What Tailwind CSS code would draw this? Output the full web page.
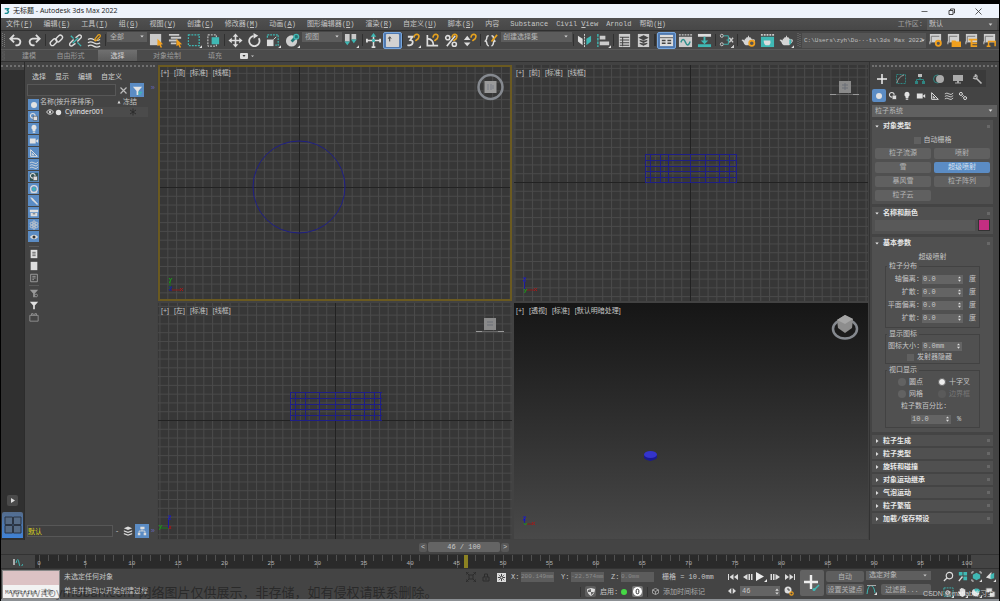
<!DOCTYPE html>
<html lang="zh-CN">
<head>
<meta charset="utf-8">
<meta name="viewport" content="width=device-width, initial-scale=1">
<title>无标题 - Autodesk 3ds Max 2022</title>
<script src="https://cdn.jsdelivr.net/npm/@tailwindcss/browser@4"></script>
</head>
<body class="relative flex min-h-screen flex-col overflow-hidden border-x border-black bg-[#444444] font-['Liberation_Mono','Noto_Sans_CJK_SC',monospace] text-[7px] leading-[10px] text-[#c6c6c6]">

<svg class="hidden" aria-hidden="true">
  <symbol id="grip" viewBox="0 0 4 16"><path d="M1 1v14M3 2v14" stroke="#777" stroke-dasharray="1 1"/></symbol>
  <symbol id="filter" viewBox="0 0 12 12"><path d="M1 2h10L7 6.500V11H5V6.500z" fill="currentColor"/></symbol>
  <symbol id="down" viewBox="0 0 6 4"><path d="M.5.5h5L3 3.500z" fill="currentColor"/></symbol>
  <symbol id="spin" viewBox="0 0 4 8"><path d="M0 3h4L2 .5zM0 5h4L2 7.500z" fill="#ddd"/></symbol>
  <symbol id="sphere" viewBox="0 0 12 12"><circle cx="6" cy="6" r="3.600" fill="#e2e2e2"/></symbol>
  <symbol id="shapes" viewBox="0 0 12 12"><circle cx="4.500" cy="4.500" r="2.800" fill="none" stroke="#ddd" stroke-width="1.300"/><rect x="5" y="5" width="5" height="5" fill="#ddd" stroke="#444" stroke-width=".6"/></symbol>
  <symbol id="bulb" viewBox="0 0 12 12"><path d="M6 1a3.300 3.300 0 0 0-1.700 6v1.500h3.400V7A3.300 3.300 0 0 0 6 1zM4.500 9h3v1.500h-3z" fill="#e2e2e2"/></symbol>
  <symbol id="camera" viewBox="0 0 12 12"><path d="M1 3h7v6H1zM8 6l3-2.500v5z" fill="#e2e2e2"/></symbol>
  <symbol id="helper" viewBox="0 0 12 12"><path d="M2 2v8h8zM4 6.500v1.700h1.800z" fill="none" stroke="#ddd" stroke-width="1.200"/></symbol>
  <symbol id="waves" viewBox="0 0 12 12"><path d="M1 3.500q2.500-2 5 0t5-1M1 6.500q2.500-2 5 0t5-1M1 9.500q2.500-2 5 0t5-1" fill="none" stroke="#ddd"/></symbol>
  <symbol id="gears" viewBox="0 0 12 12"><circle cx="3.500" cy="3.500" r="1.800" fill="none" stroke="#ddd" stroke-width="1.200"/><circle cx="8.500" cy="8.500" r="1.800" fill="none" stroke="#ddd" stroke-width="1.200"/><path d="M4.500 7.500L7 5" stroke="#ddd"/></symbol>
  <symbol id="teapot" viewBox="0 0 16 16"><path d="M4 6h8q2 4-1 7H5Q3 12 2.500 9.500L.5 7.500 2 7l2 1zM6 4.500h4L11 6H5zM7.500 3h1v1.500h-1zM12.500 7c3-1.500 3 3 0 4V9.800c1.500-1 1.500-2 0-1.600z" fill="#d4d4d4"/></symbol>
  <symbol id="page" viewBox="0 0 16 16"><path d="M2 1h12v9H2z" fill="#cfcfcf"/><path d="M3.500 10V3.500h8.500" fill="none" stroke="#777"/><path d="M2 12V9" stroke="#cfcfcf"/></symbol>
  <symbol id="magnet" viewBox="0 0 16 16"><path d="M8.500 5q.5-4 3.500-3.500T13 6l-3 2.500" fill="none" stroke="#e5a11e" stroke-width="1.800"/></symbol>
</svg>

<div class="h-1 shrink-0 bg-black"></div>

<header class="flex h-[14px] shrink-0 items-center bg-[#eef3fb] pl-[3px] font-['Open_Sans','Noto_Sans_CJK_SC',sans-serif] text-[#222]">
  <svg class="mr-[3px] size-[6px]" viewBox="0 0 8 8"><path d="M1 1h5L4.500 3.500Q7 4 5.500 6T1 7" fill="none" stroke="#1b8d92" stroke-width="1.800"/></svg>
  <h1>无标题 - Autodesk 3ds Max 2022</h1>
  <div class="ml-auto flex pr-[7px]">
    <button aria-label="最小化" class="grid w-[27px] place-items-center"><svg class="size-[7px]" viewBox="0 0 7 7"><path d="M.5 3.500h6" stroke="#444" stroke-width=".8"/></svg></button>
    <button aria-label="还原" class="grid w-[27px] place-items-center"><svg class="size-[7px]" viewBox="0 0 7 7" fill="none" stroke="#333" stroke-width=".9"><path d="M1 2.500h4v4H1zM2.500 2V1h4v4H5.500"/></svg></button>
    <button aria-label="关闭" class="grid w-[27px] place-items-center"><svg class="size-[7px]" viewBox="0 0 7 7"><path d="M.5.5l6 6M6.500.5l-6 6" stroke="#333" stroke-width=".8"/></svg></button>
  </div>
</header>

<nav class="flex h-3 shrink-0 items-center gap-[11px] whitespace-nowrap bg-linear-to-b from-[#505050] to-[#474747] pl-[5px]">
  <button>文件(<u>F</u>)</button><button>编辑(<u>E</u>)</button><button>工具(<u>T</u>)</button><button>组(<u>G</u>)</button><button>视图(<u>V</u>)</button><button>创建(<u>C</u>)</button><button>修改器(<u>M</u>)</button><button>动画(<u>A</u>)</button><button>图形编辑器(<u>D</u>)</button><button>渲染(<u>R</u>)</button><button>自定义(<u>U</u>)</button><button>脚本(<u>S</u>)</button><button>内容</button>
  <div class="flex gap-2"><button>Substance</button><button>Civil <u>V</u>iew</button><button>Arnold</button><button>帮助(<u>H</u>)</button></div>
  <div class="ml-auto flex items-center gap-1 pr-[2px] text-[#a0a0a0]">
    <label for="ws">工作区:</label>
    <div class="relative w-[70px]">
      <select id="ws" class="block h-[11px] w-full appearance-none bg-[#585858] pl-[2px] leading-[11px] text-[#c6c6c6]"><option>默认</option></select>
      <svg class="pointer-events-none absolute top-1 right-1 h-[3px] w-[5px] text-[#ccc]"><use href="#down"/></svg>
    </div>
  </div>
</nav>

<div class="flex h-[19px] shrink-0 items-center border-t border-[#303030] bg-[#474747] text-[#d4d4d4] [&_button]:grid [&_button]:h-[17px] [&_button]:w-[19px] [&_button]:shrink-0 [&_button]:place-items-center [&_button>svg]:size-[15px]">
  <svg class="h-4 w-[5px]"><use href="#grip"/></svg>
  <button aria-label="撤销"><svg viewBox="0 0 16 16" fill="none" stroke="#ddd" stroke-width="2"><path d="M3 6h7q4 1 3 4.500T8 13M6.500 2L2.500 6l4 4"/></svg></button>
  <button aria-label="重做"><svg viewBox="0 0 16 16" fill="none" stroke="#ddd" stroke-width="2"><path d="M13 6H6Q2 7 3 10.500T8 13M9.500 2l4 4-4 4"/></svg></button>
  <i class="mx-px h-3 w-px shrink-0 bg-[#303030]"></i>
  <button aria-label="链接"><svg viewBox="0 0 16 16" fill="none" stroke="#ddd" stroke-width="1.500"><rect x="1" y="7.500" width="8" height="4.600" rx="2.300" transform="rotate(-45 5 10)"/><rect x="7" y="3.500" width="8" height="4.600" rx="2.300" transform="rotate(-45 11 6)"/></svg></button>
  <button aria-label="取消链接"><svg viewBox="0 0 16 16" fill="none" stroke="#ddd" stroke-width="1.500"><path d="M6 7L2 11q-1 3 2 3l4-3M8 5l4-3q3 0 2 3l-4 4"/><path d="M3 3l3 3M10 10l4 4M11 5L5 11" stroke="#3fb8b4"/></svg></button>
  <button aria-label="绑定到空间扭曲"><svg viewBox="0 0 16 16" fill="none" stroke="#ddd" stroke-width="1.300"><path d="M1 7q3-2 6 0t7 0M1 10.500q3-2 6 0t7 0M1 14q3-2 6 0t7 0"/><path d="M8 7l4-5q3-1 2 2l-4 4q-2 1-2-1" stroke="#e5a11e"/></svg></button>
  <i class="mx-px h-3 w-px shrink-0 bg-[#303030]"></i>
  <div class="relative w-10 shrink-0 self-start pt-px">
    <select aria-label="选择过滤器" class="block h-[10px] w-full appearance-none bg-[#5c5c5c] pl-[3px] leading-[10px] text-[#b4b4b4]"><option>全部</option></select>
    <svg class="pointer-events-none absolute top-1 right-[3px] h-[3px] w-1"><use href="#down"/></svg>
  </div>
  <button aria-label="选择对象"><svg viewBox="0 0 16 16"><path d="M1 1h12v12H1z" fill="#c9c9c9"/><path d="M9 6l6 6-2.500.3 1.500 3-1.500.5-1.500-3L9 14z" fill="#f0a01e"/></svg></button>
  <button aria-label="按名称选择"><svg viewBox="0 0 16 16"><path d="M1 2h11M3 5h11M1 8h9M3 11h6" stroke="#c9c9c9" stroke-width="2"/><path d="M9 6l6 6-2.500.3 1.500 3-1.500.5-1.500-3L9 14z" fill="#f0a01e"/></svg></button>
  <button aria-label="矩形选择区域"><svg viewBox="0 0 16 16"><rect x="1.500" y="2" width="11.500" height="11.500" fill="none" stroke="#3fb8b4" stroke-width="1.300" stroke-dasharray="2 1.200"/><path d="M16 13v3h-3z" fill="#ddd"/></svg></button>
  <button aria-label="窗口/交叉"><svg viewBox="0 0 16 16"><rect x="2" y="2" width="9" height="12" fill="none" stroke="#ddd" stroke-dasharray="2 1.200"/><rect x="6" y="4.500" width="8" height="7.500" fill="#3fb8b4"/></svg></button>
  <i class="mx-px h-3 w-px shrink-0 bg-[#303030]"></i>
  <button aria-label="选择并移动"><svg viewBox="0 0 16 16"><path d="M8 3v10M3 8h10" stroke="#ddd" stroke-width="1.700"/><path d="M8 .5L11 4H5zM8 15.500L11 12H5zM.5 8L4 5v6zM15.500 8L12 5v6z" fill="#ddd"/></svg></button>
  <button aria-label="选择并旋转"><svg viewBox="0 0 16 16"><path d="M12.500 5.500A5.500 5.500 0 1 1 7 3" fill="none" stroke="#ddd" stroke-width="1.900"/><path d="M7 0l5 3-5 3z" fill="#ddd"/></svg></button>
  <button aria-label="选择并均匀缩放"><svg viewBox="0 0 16 16"><path d="M1 7h7v7H1z" fill="#ddd"/><path d="M1.500 5V2H13v11h-3" fill="none" stroke="#3fb8b4" stroke-width="1.300" stroke-dasharray="2 1"/><path d="M8 7l3-3" stroke="#ddd"/><path d="M16 13v3h-3z" fill="#ddd"/></svg></button>
  <button aria-label="选择并放置"><svg viewBox="0 0 16 16"><circle cx="7" cy="8.500" r="6" fill="#cfcfcf"/><path d="M7 9l6-6" stroke="#277" stroke-width="3"/><circle cx="12" cy="4" r="2.500" fill="none" stroke="#3fb8b4" stroke-width="1.500"/><path d="M16 13v3h-3z" fill="#ddd"/></svg></button>
  <div class="relative w-10 shrink-0 self-start pt-px">
    <select aria-label="参考坐标系" class="block h-[10px] w-full appearance-none bg-[#5c5c5c] pl-[3px] leading-[10px] text-[#b4b4b4]"><option>视图</option></select>
    <svg class="pointer-events-none absolute top-1 right-[3px] h-[3px] w-1"><use href="#down"/></svg>
  </div>
  <button aria-label="使用轴点中心"><svg viewBox="0 0 16 16"><path d="M1 1h5v8H1zM8 1h5v6H8z" fill="#c9c9c9"/><path d="M.5 9h6l-3 4zM7.500 7h6l-3 4z" fill="#3fb8b4"/><path d="M16 13v3h-3z" fill="#ddd"/></svg></button>
  <i class="mx-px h-3 w-px shrink-0 bg-[#303030]"></i>
  <button aria-label="选择并操纵"><svg viewBox="0 0 16 16"><path d="M8 3v12M1 8h14" stroke="#ddd" stroke-width="1.700"/><path d="M1 6v4M15 6v4M6 15h4" stroke="#ddd" stroke-width="2"/><path d="M8 0l3 4H5zM6.500 6.500h3v3h-3z" fill="#3fb8b4"/></svg></button>
  <button aria-label="键盘快捷键覆盖切换" class="rounded-xs border border-[#78a7de] bg-[#4f79b0]"><svg viewBox="0 0 16 16"><rect x="1" y="1" width="14" height="14" rx="1" fill="#d2d2d2"/><path d="M5 9V5M3.500 6L5 4l1.500 2" fill="none" stroke="#333"/></svg></button>
  <i class="mr-px h-3 w-px shrink-0 bg-[#303030]"></i>
  <button aria-label="捕捉开关"><svg viewBox="0 0 16 16"><path d="M2 4h5L4.500 7.500Q8 8 7 11T1.500 13" fill="none" stroke="#ddd" stroke-width="1.900"/><use href="#magnet"/><path d="M16 13v3h-3z" fill="#ddd"/></svg></button>
  <button aria-label="角度捕捉"><svg viewBox="0 0 16 16"><path d="M2.500 2v11.500H14M3 6q6 1 6 7" fill="none" stroke="#ddd" stroke-width="1.800"/><use href="#magnet"/></svg></button>
  <button aria-label="百分比捕捉"><svg viewBox="0 0 16 16" fill="none" stroke="#ddd" stroke-width="1.700"><circle cx="4" cy="5" r="2.200"/><circle cx="11" cy="12" r="2.200"/><path d="M3 14L12 3"/><use href="#magnet"/></svg></button>
  <button aria-label="微调器捕捉"><svg viewBox="0 0 16 16"><path d="M1 7.500h7L4.500 3zM1 10h7l-3.500 4z" fill="#ddd"/><use href="#magnet"/></svg></button>
  <i class="mr-px h-3 w-px shrink-0 bg-[#303030]"></i>
  <button aria-label="管理选择集"><svg viewBox="0 0 16 16" fill="none" stroke="#ddd" stroke-width="1.600"><path d="M5 3Q3 3 3 5t-1.500 3.500Q3 9 3 11t2 3M8 3q2 0 2 2t1.500 3.500Q10 9 10 11t-2 3"/><path d="M8 9l6-7" stroke="#e5a11e" stroke-width="1.800"/></svg></button>
  <div class="relative w-[71px] shrink-0 self-start pt-px">
    <select aria-label="创建选择集" class="block h-[10px] w-full appearance-none bg-[#5c5c5c] pl-[2px] leading-[10px] text-[#b4b4b4]"><option>创建选择集</option></select>
    <svg class="pointer-events-none absolute top-1 right-1 h-[3px] w-1"><use href="#down"/></svg>
  </div>
  <i class="mx-px h-3 w-px shrink-0 bg-[#303030]"></i>
  <button aria-label="镜像"><svg viewBox="0 0 16 16"><path d="M1 3l5 3v7l-5-4z" fill="#ddd"/><path d="M8 1v14" stroke="#ddd" stroke-dasharray="2 1"/><path d="M15 3l-5 3v7l5-4z" fill="#3fb8b4"/></svg></button>
  <button aria-label="对齐"><svg viewBox="0 0 16 16"><path d="M2 1v14" stroke="#3fb8b4" stroke-width="1.500" stroke-dasharray="3 1"/><path d="M4 3h6v4H4zM4 9h10v4H4z" fill="#ccc"/><path d="M16 13v3h-3z" fill="#ddd"/></svg></button>
  <i class="mr-px h-3 w-px shrink-0 bg-[#303030]"></i>
  <button aria-label="场景资源管理器"><svg viewBox="0 0 16 16"><path d="M2 1h12v14H2z" fill="#ccc"/><path d="M3 4.500h10M3 7.500h10M3 10.500h10M3 13h10M6 4v10" stroke="#444" stroke-width="1.100"/></svg></button>
  <button aria-label="层资源管理器"><svg viewBox="0 0 16 16"><path d="M2 1h12v14H2z" fill="#ccc"/><path d="M8 3l4 2-4 2-4-2zM4 8l4 2 4-2M4 11l4 2 4-2" fill="#444" stroke="#444" stroke-width="1.300"/></svg></button>
  <i class="mx-px h-3 w-[2px] shrink-0 bg-[#303030]"></i>
  <button aria-label="显示功能区" class="rounded-xs border border-[#78a7de] bg-[#4f79b0]"><svg viewBox="0 0 16 16"><path d="M1 2h14v12H1z" fill="#ddd"/><path d="M1 5h14" stroke="#555"/><path d="M3 8h4M9 8h4M3 11h4M9 11h4" stroke="#444" stroke-width="1.700"/></svg></button>
  <button aria-label="曲线编辑器"><svg viewBox="0 0 16 16"><path d="M1 4h14v11H1z" fill="#ccc"/><path d="M1 2h14" stroke="#ccc" stroke-width="1.500" stroke-dasharray="2 1"/><path d="M3 10q2.500-6 5 0t5-1" fill="none" stroke="#2f8f8c" stroke-width="1.500"/></svg></button>
  <button aria-label="图解视图"><svg viewBox="0 0 16 16"><path d="M1 1h14v3H1z" fill="#ddd"/><path d="M7 4h2v4h3l-4 4-4-4h3z" fill="#3fb8b4"/><path d="M1 12h14v3H1z" fill="#3fb8b4"/></svg></button>
  <i class="mx-px h-3 w-px shrink-0 bg-[#303030]"></i>
  <button aria-label="材质编辑器"><svg viewBox="0 0 16 16" fill="none" stroke="#ccc"><circle cx="3" cy="3" r="1.600"/><circle cx="3" cy="12" r="1.600"/><path d="M5 3h5v9H5M8 7.500h3" stroke="#3fb8b4"/><path d="M11 5l4 5M15 5l-4 5" stroke-width="1.500"/><path d="M16 13v3h-3z" fill="#ddd"/></svg></button>
  <i class="mx-px h-3 w-px shrink-0 bg-[#303030]"></i>
  <button aria-label="渲染设置"><svg viewBox="0 0 16 16"><use href="#teapot"/><circle cx="11.500" cy="11" r="2.800" fill="#555" stroke="#f0a01e" stroke-width="1.800"/></svg></button>
  <button aria-label="渲染帧窗口"><svg viewBox="0 0 16 16"><path d="M1 4h14v11H1z" fill="#3fb8b4"/><path d="M1 2h14" stroke="#ccc" stroke-width="2" stroke-dasharray="2 1"/><path d="M4 8h7q1 3-1 5H6Q4 12 4 8z" fill="#ddd"/></svg></button>
  <button aria-label="渲染产品"><svg viewBox="0 0 16 16"><use href="#teapot"/><path d="M12 7v5" stroke="#3fb8b4" stroke-width="2"/><path d="M16 13v3h-3z" fill="#ddd"/></svg></button>
  <svg class="mx-px h-4 w-1 shrink-0"><use href="#grip"/></svg>
  <div class="relative min-w-0 flex-1">
    <select aria-label="项目文件夹" class="block h-[15px] w-full appearance-none bg-[#555] pl-[2px] text-[6px] leading-[15px] text-[#c0c0c0]"><option>C:\Users\zyh\Do···ts\3ds Max 2022</option></select>
    <svg class="pointer-events-none absolute top-[6px] right-px h-[3px] w-1"><use href="#down"/></svg>
  </div>
  <div class="flex pr-px [&>button]:w-[18px]">
    <button aria-label="项目设置"><svg viewBox="0 0 16 16"><use href="#page"/><circle cx="11" cy="11" r="2.700" fill="#555" stroke="#f0a01e" stroke-width="2"/></svg></button>
    <button aria-label="打开项目"><svg viewBox="0 0 16 16"><use href="#page"/><path d="M6 8h4l1 1h5v6H6z" fill="#f0a01e"/></svg></button>
    <button aria-label="项目树"><svg viewBox="0 0 16 16"><use href="#page"/><path d="M5 7h9M8 8v6h6M8 11h6" fill="none" stroke="#f0a01e" stroke-width="2"/></svg></button>
    <button aria-label="项目路径"><svg viewBox="0 0 16 16"><use href="#page"/><path d="M7 14V9h7v5M5 14h4" fill="none" stroke="#f0a01e" stroke-width="1.600"/></svg></button>
  </div>
</div>

<div class="flex h-[13px] shrink-0 items-center border-y border-y-[#5a5a5a] border-b-[#303030] bg-[#4b4b4b] text-[#9c9c9c]">
  <svg class="h-[11px] w-[5px]"><use href="#grip"/></svg>
  <button class="w-[46px]">建模</button>
  <button class="w-[37px]">自由形式</button>
  <button class="ml-[9px] h-full w-[39px] bg-linear-to-b from-[#707070] to-[#5c5c5c] text-[#d4d4d4]">选择</button>
  <button class="ml-[10px] w-[40px]">对象绘制</button>
  <button class="ml-[18px] w-[20px]">填充</button>
  <button aria-label="更多" class="ml-[15px]"><svg class="h-[6px] w-[15px]" viewBox="0 0 15 6"><rect width="8" height="6" rx="1" fill="#ddd"/><path d="M2.500 2h3L4 4z" fill="#333"/><path d="M11 2.500h3L12.500 4z" fill="#ccc"/></svg></button>
</div>

<main class="flex min-h-0 flex-1 bg-[#424242]">
  <aside class="flex w-[23px] shrink-0 flex-col items-center bg-[#303030] pb-[2px]">
    <div class="flex h-2 w-full items-center bg-[#444]"><div class="h-[2px] w-full border-t-2 border-dotted border-[#707070]"></div></div>
    <button aria-label="播放" class="mt-auto grid size-[11px] place-items-center rounded-xs bg-[#4a4a4a]"><svg class="h-[5px] w-1" viewBox="0 0 4 5"><path d="M0 0l4 2.500L0 5z" fill="#ddd"/></svg></button>
    <button aria-label="视口布局" class="mt-[6px] grid h-[26px] w-[21px] place-items-center rounded-t-xs bg-linear-to-b from-[#546c8c] to-[#3f82d6]"><svg class="size-[18px]" viewBox="0 0 18 18" fill="#566b85" stroke="#2b3442"><path d="M1 1h7.500v7.500H1zM9.500 1H17v7.500H9.500zM1 9.500h7.500V17H1zM9.500 9.500H17V17H9.500z"/></svg></button>
  </aside>

  <section class="flex w-[133px] shrink-0 flex-col border-l border-[#2c2c2c] bg-[#444] px-[2px] pb-[2px]">
    <div class="flex h-2 items-center"><div class="h-[2px] w-full border-t-2 border-dotted border-[#707070]"></div></div>
    <nav class="flex h-[13px] items-center gap-[9px] pl-[5px] text-[#d0d0d0]"><button>选择</button><button>显示</button><button>编辑</button><button>自定义</button></nav>
    <div class="flex h-[14px] items-center">
      <input aria-label="搜索" class="h-3 min-w-0 flex-1 border border-[#575757] bg-[#404040]">
      <button aria-label="清除" class="grid w-[14px] place-items-center"><svg class="size-[7px]" viewBox="0 0 7 7"><path d="M.5.5l6 6M6.500.5l-6 6" stroke="#bbb" stroke-width="1.200"/></svg></button>
      <button aria-label="过滤" class="grid size-[14px] place-items-center bg-[#5b8cc4]"><svg class="size-[11px] text-[#e4e4e4]" viewBox="0 0 12 12"><use href="#filter"/><path d="M7 8h4M7 10h3" stroke="#3fb8b4" stroke-width="1.500"/></svg></button>
      <span class="w-[11px] self-start text-right text-[#6464b8]">»</span>
    </div>
    <div class="flex flex-1">
      <div class="flex w-[13px] flex-col items-center pt-[2px] text-[#d0d0d0] [&_svg]:size-[10px]">
        <div class="flex flex-col gap-px [&>button]:grid [&>button]:h-[11px] [&>button]:w-[11px] [&>button]:place-items-center [&>button]:bg-[#5b8cc4]">
          <button aria-label="几何体"><svg><use href="#sphere"/></svg></button>
          <button aria-label="图形"><svg><use href="#shapes"/></svg></button>
          <button aria-label="灯光"><svg><use href="#bulb"/></svg></button>
          <button aria-label="摄影机"><svg><use href="#camera"/></svg></button>
          <button aria-label="辅助对象"><svg><use href="#helper"/></svg></button>
          <button aria-label="空间扭曲"><svg><use href="#waves"/></svg></button>
          <button aria-label="组"><svg viewBox="0 0 12 12"><path d="M1 1h10v10H1z" fill="#355"/><use href="#shapes"/></svg></button>
          <button aria-label="外部参照"><svg viewBox="0 0 12 12"><circle cx="6" cy="6" r="4" fill="none" stroke="#ddd" stroke-width="1.500"/><circle cx="6" cy="6" r="2" fill="#3fb8b4"/><path d="M2 10.500h8" stroke="#ddd"/></svg></button>
          <button aria-label="骨骼"><svg viewBox="0 0 12 12"><path d="M2 2l2 .5 6 6.500v1.500L4 5z" fill="#ddd" stroke="#ddd" stroke-width=".6"/></svg></button>
          <button aria-label="容器"><svg viewBox="0 0 12 12"><path d="M1 2h10v3H1zM2 6h8v4H2z" fill="#ddd"/><path d="M4.500 7h3" stroke="#555"/></svg></button>
          <button aria-label="冻结对象"><svg viewBox="0 0 12 12" fill="none" stroke="#ccc"><circle cx="6" cy="6" r="1.500"/><circle cx="6" cy="2.500" r="1.500"/><circle cx="6" cy="9.500" r="1.500"/><circle cx="3" cy="4.300" r="1.500"/><circle cx="9" cy="4.300" r="1.500"/><circle cx="3" cy="7.800" r="1.500"/><circle cx="9" cy="7.800" r="1.500"/></svg></button>
          <button aria-label="隐藏对象"><svg viewBox="0 0 12 12"><path d="M1 6q5-5.500 10 0-5 5.500-10 0z" fill="#ddd"/><circle cx="6" cy="6" r="1.800" fill="#333"/></svg></button>
        </div>
        <div class="mt-1 flex flex-col gap-[2px] border-y border-[#5a5a5a] py-[2px]">
          <button aria-label="全选"><svg class="block" viewBox="0 0 12 12"><path d="M2 1h8v10H2z" fill="#ddd"/><path d="M4 4h4M4 6h4M4 8h4" stroke="#555"/></svg></button>
          <button aria-label="全部不选"><svg class="block" viewBox="0 0 12 12"><path d="M2 1h8v10H2z" fill="#ddd"/></svg></button>
          <button aria-label="反选"><svg class="block" viewBox="0 0 12 12"><path d="M2 1.500h8v9H2zM4 4h4M4 6h4M4 8h2" fill="none" stroke="#aaa"/></svg></button>
        </div>
        <div class="mt-[2px] flex flex-col gap-[2px]">
          <button aria-label="过滤器设置"><svg class="block text-[#999]" viewBox="0 0 12 12"><use href="#filter"/><circle cx="8.500" cy="9" r="1.700" fill="none" stroke="#999"/></svg></button>
          <button aria-label="过滤器"><svg class="block text-[#e0e0e0]"><use href="#filter"/></svg></button>
          <button aria-label="收藏"><svg class="block" viewBox="0 0 12 12"><path d="M1 4h10v7H1zM3 4V2h2v2M7 4V2h2v2" fill="none" stroke="#999"/></svg></button>
        </div>
      </div>
      <table class="h-min w-[108px] table-fixed border-separate border-spacing-0 text-left">
        <thead><tr class="h-[10px]"><th class="w-[77px] whitespace-nowrap p-0 font-['Liberation_Sans','Noto_Sans_CJK_SC',sans-serif] font-normal">名称(按升序排序)</th><th class="whitespace-nowrap p-0 font-normal"><span class="flex items-center gap-[2px]"><svg class="size-1" viewBox="0 0 4 4"><path d="M.5 3.500L2 .5l1.500 3z" fill="#ddd"/></svg>冻结</span></th></tr></thead>
        <tbody><tr class="h-[10px]">
          <td class="p-0"><span class="flex items-center font-['Open_Sans',sans-serif] text-[#eee]"><svg class="ml-[6px] h-[6px] w-2" viewBox="0 0 8 6"><path d="M.5 3Q4-1.500 7.500 3 4 7.500.5 3z" fill="none" stroke="#ddd"/><circle cx="4" cy="3" r="1.200" fill="#ddd"/></svg><svg class="mr-[2px] size-[9px]"><use href="#sphere"/></svg><span class="flex-1 bg-[#4b4b4b]">Cylinder001</span></span></td>
          <td class="bg-[#4b4b4b] p-0"><svg class="mx-auto size-2" viewBox="0 0 8 8"><path d="M4 .5v7M1 2l6 4M7 2L1 6" stroke="#2c2c2c"/></svg></td>
        </tr></tbody>
      </table>
    </div>
    <div class="flex h-[14px] items-center">
      <input aria-label="层" value="默认" class="h-3 min-w-0 flex-1 border border-[#575757] bg-[#404040] text-[#d8d21e]">
      <span class="w-[8px] text-center">-</span>
      <button aria-label="层列表" class="grid w-[14px] place-items-center"><svg class="size-[10px]" viewBox="0 0 12 12" fill="#ddd"><path d="M6 .5l5 2.200-5 2.200-5-2.200zM1 5l5 2 5-2v1.500l-5 2-5-2zM1 8.300l5 2 5-2v1.500l-5 2-5-2z"/></svg></button>
      <button aria-label="层次" class="grid size-[14px] place-items-center bg-[#5b8cc4]"><svg class="size-[10px]" viewBox="0 0 12 12"><path d="M4 1h5v3H4zM1 8h3v3H1zM8 8h3v3H8z" fill="#ddd"/><path d="M6 4v2M2.500 8V6h7v2" fill="none" stroke="#ddd"/></svg></button>
      <span class="w-[6px] text-right text-[#6464b8]">»</span>
    </div>
  </section>

  <div class="grid min-w-0 flex-1 grid-cols-2 grid-rows-2 gap-[2px] pt-[3px] pb-px pl-px text-[#c4c4c4]">
    <section class="relative overflow-hidden border-2 border-[#6b5a20] bg-[#373737]">
      <svg class="absolute inset-0 size-full">
        <defs><pattern id="g1" x="139" y="120" width="8.780" height="8.780" patternUnits="userSpaceOnUse"><path d="M.5 0v8.780M0 .5h8.780" stroke="#4a4a4a"/></pattern></defs>
        <rect width="100%" height="100%" fill="url(#g1)"/>
        <path d="M139.500 0v600M0 120.500h1200" stroke="#222"/>
        <circle cx="139" cy="120" r="46" fill="none" stroke="#1e1e86"/>
        <g fill="none"><path d="M10 222v-8" stroke="#1a7a1a"/><path d="M12 223h9" stroke="#8a1a1a"/><path d="M9 220h3l-3 3h3" stroke="#1a1aa0"/><path d="M9 211l1.500 2L12 211M10.500 213l-1 3" stroke="#1a9a1a"/><path d="M20 221l3 3M23 221l-3 3" stroke="#a01a1a"/></g>
        <g><circle cx="330.500" cy="20" r="12" fill="none" stroke="#85898f" stroke-width="2.500"/><rect x="324.500" y="14" width="12" height="12" fill="#9a9a9a"/><path d="M328 17v6M331 17v6M333 18v4" stroke="#7b7f88"/></g>
      </svg>
      <h2 class="relative flex gap-[5px] px-px pt-px font-['Liberation_Sans','Noto_Sans_CJK_SC',sans-serif] whitespace-nowrap"><button>[+]</button><button>[顶]</button><button>[标准]</button><button>[线框]</button></h2>
    </section>
    <section class="relative overflow-hidden bg-[#373737]">
      <svg class="absolute inset-0 size-full">
        <defs><pattern id="g2" x="176" y="117" width="8.780" height="8.780" patternUnits="userSpaceOnUse"><path d="M.5 0v8.780M0 .5h8.780" stroke="#4a4a4a"/></pattern></defs>
        <rect width="100%" height="100%" fill="url(#g2)"/>
        <path d="M176.500 0v600M0 117.500h1200" stroke="#222"/>
        <path d="M131 89.500h92M131 95.500h92M131 101.500h92M131 106.500h92M131 112.500h92M131 117.500h92M131.500 89v29M136.500 89v29M146.500 89v29M154.500 89v29M176.500 89v29M191.500 89v29M205.500 89v29M215.500 89v29M222.500 89v29" stroke="#1e1e86"/>
        <g fill="none"><path d="M10.500 225v-8" stroke="#1a1aa0"/><path d="M12 225h8" stroke="#8a1a1a"/><path d="M9 213h3l-3 3h3" stroke="#1a1ac0"/><path d="M10 224l1.500 2L13 224M11.500 226l-1 2" stroke="#1a9a1a"/><path d="M20 223l3 3M23 223l-3 3" stroke="#a01a1a"/></g>
        <rect x="325" y="16" width="12" height="12" fill="#8a8a8a"/><path d="M328 20h6M328 23h6M331 18v7" stroke="#6b6f76"/><path d="M316 29.500h6M339 29.500h6" stroke="#999"/><path d="M322 29.500h17" stroke="#666"/>
      </svg>
      <h2 class="relative flex gap-[5px] px-[2px] pt-[3px] font-['Liberation_Sans','Noto_Sans_CJK_SC',sans-serif] whitespace-nowrap"><button>[+]</button><button>[前]</button><button>[标准]</button><button>[线框]</button></h2>
    </section>
    <section class="relative overflow-hidden bg-[#373737]">
      <svg class="absolute inset-0 size-full">
        <defs><pattern id="g3" x="177" y="117" width="8.780" height="8.780" patternUnits="userSpaceOnUse"><path d="M.5 0v8.780M0 .5h8.780" stroke="#4a4a4a"/></pattern></defs>
        <rect width="100%" height="100%" fill="url(#g3)"/>
        <path d="M177.500 0v600M0 117.500h1200" stroke="#222"/>
        <path d="M132 89.500h92M132 95.500h92M132 101.500h92M132 106.500h92M132 112.500h92M132 117.500h92M132.500 89v29M137.500 89v29M147.500 89v29M161.500 89v29M177.500 89v29M192.500 89v29M206.500 89v29M216.500 89v29M222.500 89v29" stroke="#1e1e86"/>
        <g fill="none"><path d="M10.500 225v-8" stroke="#1a1aa0"/><path d="M3 225h7" stroke="#1a7a1a"/><path d="M10 213h3l-3 3h3" stroke="#1a1ac0"/><path d="M1 222l1.500 2L4 222M2.500 224l-1 3" stroke="#1a9a1a"/><path d="M11 223l2 3M13 223l-2 3" stroke="#a01a1a"/></g>
        <rect x="326" y="15" width="12" height="12" fill="#8a8a8a"/><path d="M329 19h6M329 22h6" stroke="#6b6f76"/><path d="M318 28.500h6M340 28.500h6" stroke="#999"/><path d="M324 28.500h16" stroke="#666"/>
      </svg>
      <h2 class="relative flex gap-[5px] px-[3px] pt-[3px] font-['Liberation_Sans','Noto_Sans_CJK_SC',sans-serif] whitespace-nowrap"><button>[+]</button><button>[左]</button><button>[标准]</button><button>[线框]</button></h2>
    </section>
    <section class="relative overflow-hidden bg-linear-to-b from-[#161616] to-[#494949]">
      <svg class="absolute inset-0 size-full">
        <path d="M130 151v4q6 6 13 0v-4z" fill="#1a1a90"/><ellipse cx="136.500" cy="151.500" rx="6.500" ry="3.500" fill="#3434cc"/>
        <g fill="none"><path d="M10.500 221v-5" stroke="#1a1aa0"/><path d="M12 221h7" stroke="#8a1a1a"/><path d="M9 214h3l-3 3h3" stroke="#1a1ac0"/><path d="M10 220l1.500 2L13 220" stroke="#1a9a1a"/><path d="M18 219l3 3M21 219l-3 3" stroke="#a01a1a"/></g>
        <ellipse cx="331" cy="26" rx="12" ry="9.500" fill="none" stroke="#85898f" stroke-width="2.500"/><path d="M331 12l8 4-1 9-7 5-7-5-1-8z" fill="#8d8d8d"/><path d="M323 17l8 4 8-5-8-4z" fill="#a5a5a5"/>
      </svg>
      <h2 class="relative flex gap-[5px] px-[2px] pt-[3px] font-['Liberation_Sans','Noto_Sans_CJK_SC',sans-serif] whitespace-nowrap"><button>[+]</button><button>[透视]</button><button>[标准]</button><button>[默认明暗处理]</button></h2>
    </section>
  </div>

  <aside class="ml-px flex w-[130px] shrink-0 flex-col border-l border-[#333] bg-[#444] pr-[2px] pl-[2px]">
    <div class="flex h-2 items-center"><div class="h-[2px] w-full border-t-2 border-dotted border-[#707070]"></div></div>
    <div class="mr-auto flex h-[17px] items-center bg-[#3a3a3a] [&>button]:grid [&>button]:h-full [&>button]:w-[19px] [&>button]:place-items-center [&_svg]:size-3">
      <button aria-label="创建" class="bg-[#444]"><svg viewBox="0 0 12 12"><path d="M6 1v10M1 6h10" stroke="#eee" stroke-width="1.500"/></svg></button>
      <button aria-label="修改"><svg viewBox="0 0 12 12" fill="none" stroke="#2f8581"><rect x="1.500" y="1.500" width="9" height="9" stroke-dasharray="2 1"/><path d="M2 10Q3 4 9 2" stroke="#999"/></svg></button>
      <button aria-label="层次"><svg viewBox="0 0 12 12"><path d="M4 1h4v3H4z" fill="#bbb"/><path d="M6 4v3M2.500 8V6.500h7V8" fill="none" stroke="#2f8581"/><path d="M1 8h3v3H1zM8 8h3v3H8z" fill="#2f8581"/></svg></button>
      <button aria-label="运动"><svg viewBox="0 0 12 12"><circle cx="4.500" cy="6" r="4" fill="none" stroke="#2f8581"/><circle cx="7" cy="6" r="4" fill="#aaa"/></svg></button>
      <button aria-label="显示"><svg viewBox="0 0 12 12"><path d="M1 2h10v6H1zM5 8h2v2H5zM3 9.500h6v1H3z" fill="#aaa"/></svg></button>
      <button aria-label="实用程序"><svg viewBox="0 0 12 12"><path d="M5 5l5.500 5.500" stroke="#bbb" stroke-width="1.600"/><path d="M4 1.500q2.500.5 2 3T2 5M4 1.500L4.500 3.500 2.500 4" fill="none" stroke="#bbb" stroke-width="1.200"/></svg></button>
    </div>
    <div class="flex h-[17px] items-center [&>button]:grid [&>button]:h-[13px] [&>button]:w-[14px] [&>button]:place-items-center [&_svg]:size-[10px]">
      <button aria-label="几何体" class="rounded-xs bg-[#5b8cc4]"><svg><use href="#sphere"/></svg></button>
      <button aria-label="图形"><svg><use href="#shapes"/></svg></button>
      <button aria-label="灯光"><svg><use href="#bulb"/></svg></button>
      <button aria-label="摄影机"><svg><use href="#camera"/></svg></button>
      <button aria-label="辅助对象"><svg><use href="#helper"/></svg></button>
      <button aria-label="空间扭曲"><svg><use href="#waves"/></svg></button>
      <button aria-label="系统"><svg><use href="#gears"/></svg></button>
    </div>
    <div class="relative mt-px">
      <select aria-label="类别" class="block h-3 w-full appearance-none bg-[#606060] pl-[3px] leading-3 text-[#b8b8b8]"><option>粒子系统</option></select>
      <svg class="pointer-events-none absolute top-1 right-1 h-[3px] w-[5px] text-[#ddd]"><use href="#down"/></svg>
    </div>

    <div class="mt-[3px] mr-1 flex flex-col gap-[3px]">
      <section class="bg-[#505050] px-[3px] pb-[3px]">
        <h3 class="flex h-3 items-center gap-1 font-bold text-[#e8e8e8]"><svg class="h-[3px] w-1"><use href="#down"/></svg>对象类型<i class="ml-auto size-[3px] bg-[#686868]"></i></h3>
        <label class="flex h-4 items-center justify-center gap-[3px]"><input type="checkbox" class="size-[7px] appearance-none bg-[#606060]">自动栅格</label>
        <div class="grid grid-cols-2 gap-[3px] text-[#b4b4b4] [&>button]:h-[11px] [&>button]:rounded-xs [&>button]:bg-[#606060] [&>button]:leading-[11px]">
          <button>粒子流源</button><button>喷射</button><button>雪</button><button class="bg-[#5b8cc4]! text-[#d5e2f2]">超级喷射</button><button>暴风雪</button><button>粒子阵列</button><button>粒子云</button>
        </div>
      </section>

      <section class="bg-[#505050] px-[3px] pb-[3px]">
        <h3 class="flex h-3 items-center gap-1 font-bold text-[#e8e8e8]"><svg class="h-[3px] w-1"><use href="#down"/></svg>名称和颜色<i class="ml-auto size-[3px] bg-[#686868]"></i></h3>
        <div class="flex h-3 items-center gap-[3px]"><input aria-label="名称" class="h-[11px] min-w-0 flex-1 bg-[#595959]"><button aria-label="对象颜色" class="size-3 border border-[#333] bg-[#c42e82]"></button></div>
      </section>

      <section class="bg-[#505050] px-[3px] pb-[4px]">
        <h3 class="flex h-3 items-center gap-1 font-bold text-[#e8e8e8]"><svg class="h-[3px] w-1"><use href="#down"/></svg>基本参数<i class="ml-auto size-[3px] bg-[#686868]"></i></h3>
        <p class="pt-[3px] text-center">超级喷射</p>
        <fieldset class="mr-[10px] ml-[10px] border border-[#424242] pb-1">
          <legend class="ml-px px-[2px] leading-2">粒子分布</legend>
          <div class="grid grid-cols-[34px_41px_1fr] items-center gap-x-[2px] gap-y-[3px] pt-[4px] leading-[10px] [&_label]:text-right">
            <label for="p1">轴偏离:</label><div class="flex h-[9px] items-center bg-[#646464] pr-px"><input id="p1" value="0.0" class="min-w-0 flex-1 pl-px"><svg class="h-[6px] w-[5px]"><use href="#spin"/></svg></div><span class="pl-1">度</span>
            <label for="p2">扩散:</label><div class="flex h-[9px] items-center bg-[#646464] pr-px"><input id="p2" value="0.0" class="min-w-0 flex-1 pl-px"><svg class="h-[6px] w-[5px]"><use href="#spin"/></svg></div><span class="pl-1">度</span>
            <label for="p3" class="whitespace-nowrap">平面偏离:</label><div class="flex h-[9px] items-center bg-[#646464] pr-px"><input id="p3" value="0.0" class="min-w-0 flex-1 pl-px"><svg class="h-[6px] w-[5px]"><use href="#spin"/></svg></div><span class="pl-1">度</span>
            <label for="p4">扩散:</label><div class="flex h-[9px] items-center bg-[#646464] pr-px"><input id="p4" value="0.0" class="min-w-0 flex-1 pl-px"><svg class="h-[6px] w-[5px]"><use href="#spin"/></svg></div><span class="pl-1">度</span>
          </div>
        </fieldset>
        <fieldset class="mx-[10px] mt-[2px] border border-[#424242] pb-px">
          <legend class="ml-px px-[2px] leading-2">显示图标</legend>
          <div class="flex items-center gap-[2px] pt-[3px] pl-[2px]"><label for="p5" class="whitespace-nowrap">图标大小:</label><div class="flex h-[9px] w-10 items-center bg-[#646464] pr-px"><input id="p5" value="0.0mm" class="min-w-0 flex-1 pl-px"><svg class="h-[6px] w-[5px]"><use href="#spin"/></svg></div></div>
          <label class="mt-px flex items-center gap-[3px] pl-[21px]"><input type="checkbox" class="size-[7px] appearance-none bg-[#606060]">发射器隐藏</label>
        </fieldset>
        <fieldset class="mx-[10px] mt-[2px] border border-[#424242] pb-[3px]">
          <legend class="ml-px px-[2px] leading-2">视口显示</legend>
          <div class="grid grid-cols-[40px_1fr] gap-y-[2px] pt-[3px] pl-3">
            <label class="flex items-center gap-[3px]"><input type="radio" name="vp" class="size-2 appearance-none rounded-full bg-[#626262]">圆点</label>
            <label class="flex items-center gap-[3px]"><input type="radio" name="vp" checked class="size-2 appearance-none rounded-full border border-[#666] bg-[#eee]">十字叉</label>
            <label class="flex items-center gap-[3px]"><input type="radio" name="vp" class="size-2 appearance-none rounded-full bg-[#626262]">网格</label>
            <label class="flex items-center gap-[3px] text-[#777]"><input type="radio" name="vp" disabled class="size-2 appearance-none rounded-full bg-[#5a5a5a]">边界框</label>
          </div>
          <label for="p6" class="mt-[2px] block pl-[15px]">粒子数百分比:</label>
          <div class="mt-[3px] flex items-center gap-[6px] pl-[25px]"><div class="flex h-[9px] w-10 items-center bg-[#646464] pr-px"><input id="p6" value="10.0" class="min-w-0 flex-1 pl-px"><svg class="h-[6px] w-[5px]"><use href="#spin"/></svg></div>%</div>
        </fieldset>
      </section>

      <div class="flex flex-col gap-[2px] font-bold text-[#e8e8e8] [&>button]:flex [&>button]:h-[11px] [&>button]:items-center [&>button]:gap-1 [&>button]:bg-[#505050] [&>button]:px-[3px] [&_svg]:h-1 [&_svg]:w-1">
        <button><svg viewBox="0 0 4 4"><path d="M1 0l2.500 2L1 4z" fill="#ddd"/></svg>粒子生成<i class="ml-auto size-[3px] bg-[#686868]"></i></button>
        <button><svg viewBox="0 0 4 4"><path d="M1 0l2.500 2L1 4z" fill="#ddd"/></svg>粒子类型<i class="ml-auto size-[3px] bg-[#686868]"></i></button>
        <button><svg viewBox="0 0 4 4"><path d="M1 0l2.500 2L1 4z" fill="#ddd"/></svg>旋转和碰撞<i class="ml-auto size-[3px] bg-[#686868]"></i></button>
        <button><svg viewBox="0 0 4 4"><path d="M1 0l2.500 2L1 4z" fill="#ddd"/></svg>对象运动继承<i class="ml-auto size-[3px] bg-[#686868]"></i></button>
        <button><svg viewBox="0 0 4 4"><path d="M1 0l2.500 2L1 4z" fill="#ddd"/></svg>气泡运动<i class="ml-auto size-[3px] bg-[#686868]"></i></button>
        <button><svg viewBox="0 0 4 4"><path d="M1 0l2.500 2L1 4z" fill="#ddd"/></svg>粒子繁殖<i class="ml-auto size-[3px] bg-[#686868]"></i></button>
        <button><svg viewBox="0 0 4 4"><path d="M1 0l2.500 2L1 4z" fill="#ddd"/></svg>加载/保存预设<i class="ml-auto size-[3px] bg-[#686868]"></i></button>
      </div>
    </div>
  </aside>
</main>

<div class="flex h-[14px] shrink-0 items-center pl-[418px] text-[#c8c8c8]">
  <button aria-label="上一帧" class="h-[9px] w-2 rounded-xs bg-[#585858] leading-[9px]">&lt;</button>
  <button class="mx-px h-[10px] w-[72px] rounded-xs bg-[#646464]">46 / 100</button>
  <button aria-label="下一帧" class="h-[9px] w-2 rounded-xs bg-[#585858] leading-[9px]">&gt;</button>
</div>

<div class="flex h-[14px] shrink-0 border-t border-[#333]">
  <button aria-label="打开迷你曲线编辑器" class="grid w-[34px] shrink-0 place-items-center bg-[#444]"><svg class="h-2 w-[10px]" viewBox="0 0 10 8"><path d="M1 1v6" stroke="#ccc" stroke-width="1.500"/><path d="M3 5q2-7 3 0t4 1" fill="none" stroke="#3fb8b4"/></svg></button>
  <div id="ruler" class="relative flex-1 bg-[#2a2a2a] text-[6px] text-[#b4b4b4]"></div>
  <div class="w-[28px] shrink-0 bg-[#444]"></div>
</div>

<footer class="flex h-[31px] shrink-0 border-t border-[#333] pt-px pr-[3px] pl-px">
  <div class="flex w-[58px] shrink-0 flex-col border border-[#888]">
    <div class="h-[14px] bg-[#dcc2c4]"></div>
    <input aria-label="MAXScript 迷你侦听器" value="MAXScript 迷你" class="h-[13px] w-full bg-[#f2f2f2] pl-[2px] text-[6px] text-[#666]">
  </div>
  <div class="ml-1 flex w-[402px] shrink flex-col gap-1 pt-[2px]"><p>未选定任何对象</p><p>单击并拖动以开始创建过程</p></div>

  <div class="flex w-[262px] shrink-0 flex-col gap-1 pt-[2px]">
    <div class="flex h-[10px] items-center">
      <button aria-label="孤立当前选择" class="w-[15px]"><svg class="block size-[10px]" viewBox="0 0 10 10" fill="none" stroke="#2c2c2c"><path d="M3 3h4v4H3zM0 3V0h3M7 0h3v3M10 7v3H7M3 10H0V7M0 0l3 3M10 0L7 3M0 10l3-3M10 10L7 7"/></svg></button>
      <button aria-label="选择锁定" class="w-4"><svg class="block size-[10px]" viewBox="0 0 10 10" fill="none" stroke="#2c2c2c"><path d="M2 5h6v4H2zM3.500 5V2h3v3M5 6v2"/></svg></button>
      <button aria-label="绝对模式" class="w-[14px]"><svg class="block size-[9px]" viewBox="0 0 10 10"><path d="M0 0h10v10H0z" fill="#ddd"/><path d="M5 1v8M1 5h8M2 2l1 1M8 2L7 3M2 8l1-1M8 8L7 7" stroke="#333"/><circle cx="5" cy="5" r="1.500" fill="#ddd" stroke="#333"/></svg></button>
      <label for="cx" class="w-[10px]">X:</label><input id="cx" value="200.149mm" class="mr-[7px] h-[10px] w-[33px] bg-[#5c5c5c] text-[6px] text-[#8c8c8c]">
      <label for="cy" class="w-[10px]">Y:</label><input id="cy" value="-22.574mm" class="mr-[7px] h-[10px] w-[33px] bg-[#5c5c5c] text-[6px] text-[#8c8c8c]">
      <label for="cz" class="w-[10px]">Z:</label><input id="cz" value="0.0mm" class="mr-[8px] h-[10px] w-[33px] bg-[#5c5c5c] text-[6px] text-[#8c8c8c]">
      <span class="whitespace-nowrap">栅格 = 10.0mm</span>
    </div>
    <div class="flex h-[11px] items-center pl-[114px]">
      <i class="mr-1 h-[10px] w-px bg-[#333]"></i>
      <button aria-label="安全" class="grid size-[11px] place-items-center rounded-xs bg-[#5e5e5e]"><svg class="size-2" viewBox="0 0 8 8"><path d="M4 0l4 1q0 5-4 7-4-2-4-7z" fill="#ddd"/><path d="M4 1v3H7Q6 6 4 7V4H1V2z" fill="#666"/></svg></button>
      <span class="ml-1 w-[19px]">启用:</span><i class="mx-[2px] size-[6px] rounded-full bg-[#45d845]"></i>
      <button aria-label="零" class="ml-[3px] grid size-[11px] place-items-center rounded-xs bg-[#777]"><svg class="size-[9px]" viewBox="0 0 9 9"><circle cx="4.500" cy="4.500" r="4.500" fill="#fff"/><rect x="3.200" y="2.200" width="2.600" height="4.600" rx="1.300" fill="none" stroke="#333"/></svg></button>
      <i class="mx-1 h-[10px] w-px bg-[#333]"></i>
      <svg class="mr-1 size-[7px] shrink-0" viewBox="0 0 8 8" fill="none" stroke="#aaa"><path d="M4 .5l3.500 1.700v3.600L4 7.500.5 5.800V2.200zM.5 2.200L4 4l3.500-1.800M4 4v3.500"/></svg>
      <button class="whitespace-nowrap text-[#aaa]">添加时间标记</button>
    </div>
  </div>

  <div class="flex w-[70px] shrink-0 flex-col gap-[3px] [&_svg]:block">
    <div class="flex h-[13px] items-center text-[#ddd]">
      <button aria-label="转至开头" class="w-[15px]"><svg class="h-2 w-[10px]" viewBox="0 0 10 8" fill="#ddd"><path d="M0 1h1v6H0zM5.500 1v6l-4-3zM10 1v6L6 4z"/></svg></button>
      <button aria-label="上一帧" class="w-[13px]"><svg class="h-2 w-[10px]" viewBox="0 0 10 8" fill="#ddd"><path d="M4.500 1v6L0 4zM5.500 1H7v6H5.500zM8 1h1.500v6H8z"/></svg></button>
      <button aria-label="播放动画" class="w-[14px]"><svg class="h-[10px] w-[11px]" viewBox="0 0 11 10" fill="#eee"><path d="M0 0l8 4.500L0 9zM11 7v3H8z"/></svg></button>
      <button aria-label="下一帧" class="w-[15px]"><svg class="h-2 w-[10px]" viewBox="0 0 10 8" fill="#ddd"><path d="M5.500 1v6L10 4zM4.500 1H3v6h1.500zM2 1H.5v6H2z"/></svg></button>
      <button aria-label="转至结尾"><svg class="h-2 w-[10px]" viewBox="0 0 10 8" fill="#ddd"><path d="M10 1H9v6h1zM4.500 1v6l4-3zM0 1v6l4-3z"/></svg></button>
    </div>
    <div class="flex h-[10px] items-center">
      <button aria-label="关键点模式" class="w-[12px]"><svg class="h-[6px] w-2" viewBox="0 0 8 6" fill="#ddd"><path d="M3.300 0v6L0 3zM4.700 0v6L8 3z"/></svg></button>
      <div class="flex h-[10px] w-10 items-center bg-[#646464] pr-px"><input aria-label="当前帧" value="46" class="min-w-0 flex-1 pl-[2px]"><svg class="h-[7px] w-1"><use href="#spin"/></svg></div>
      <button aria-label="时间配置" class="ml-1"><svg class="size-[10px]" viewBox="0 0 10 10"><circle cx="4" cy="4" r="3.500" fill="#ddd"/><path d="M4 2v2h2" fill="none" stroke="#444"/><circle cx="7.500" cy="7.500" r="1.700" fill="#444" stroke="#f0a01e" stroke-width="1.200"/></svg></button>
    </div>
  </div>

  <button aria-label="设置关键点" class="ml-[2px] grid h-[26px] w-[24px] shrink-0 place-items-center rounded-xs bg-[#626262]"><svg class="size-[18px]" viewBox="0 0 18 18"><path d="M8 1v14M1 8h14" stroke="#eee" stroke-width="2.400"/><path d="M11 16l5-5" stroke="#3fb8b4" stroke-width="1.500"/><circle cx="11" cy="15.500" r="1.500" fill="#3fb8b4"/></svg></button>
  <div class="mx-[2px] flex w-[38px] shrink-0 flex-col gap-[2px] pt-px [&>button]:h-[11px] [&>button]:rounded-xs [&>button]:bg-[#5e5e5e] [&>button]:text-[#b4b4b4]"><button>自动</button><button class="whitespace-nowrap">设置关键点</button></div>
  <div class="flex w-[65px] shrink-0 flex-col gap-1 pt-px">
    <div class="relative"><select aria-label="选定对象" class="block h-[9px] w-full appearance-none bg-[#5e5e5e] pl-[3px] leading-[9px] text-[#b8b8b8]"><option>选定对象</option></select><svg class="pointer-events-none absolute top-[3px] right-1 h-[3px] w-1"><use href="#down"/></svg></div>
    <div class="flex items-center gap-1"><button aria-label="新关键点切线"><svg class="block size-[11px]" viewBox="0 0 11 11" fill="none"><path d="M1 10Q2 1 5 1.500T9 9" stroke="#3fb8b4"/><path d="M1 1.500h9" stroke="#aaa"/><path d="M11 8v3H8z" fill="#ddd"/></svg></button><button class="h-[11px] flex-1 rounded-xs bg-[#5e5e5e] pr-2 text-[#b4b4b4]">过滤器...</button></div>
  </div>
  <div class="ml-auto grid shrink-0 grid-cols-4 gap-x-[3px] gap-y-[2px] [&_svg]:block [&_svg]:size-[11px]">
    <button aria-label="缩放"><svg viewBox="0 0 12 12"><circle cx="7" cy="5" r="3.500" fill="none" stroke="#ddd" stroke-width="1.300"/><path d="M4.500 7.500L1 11" stroke="#ddd" stroke-width="1.500"/></svg></button>
    <button aria-label="缩放所有视图"><svg viewBox="0 0 12 12"><path d="M2 1h4v4H2zM7 1h4v4H7zM7 6h4v4H7z" fill="#3fb8b4"/><path d="M6 6l-4 5" stroke="#ddd" stroke-width="1.500"/></svg></button>
    <button aria-label="最大化显示"><svg viewBox="0 0 12 12"><path d="M1 3V1h2M9 1h2v2M1 9v2h2" fill="none" stroke="#ddd"/><path d="M6 2l4 2v4L6 10 2 8V4z" fill="#3fb8b4"/><path d="M12 9v3H9z" fill="#ddd"/></svg></button>
    <button aria-label="所有视图最大化"><svg viewBox="0 0 12 12"><path d="M1 7l6-6v8z" fill="#ddd"/><path d="M6 4l4-2v6L6 9z" fill="#3fb8b4"/><path d="M12 9v3H9z" fill="#ddd"/></svg></button>
    <button aria-label="缩放区域"><svg viewBox="0 0 12 12"><path d="M1 1h10v9H1z" fill="none" stroke="#3fb8b4" stroke-dasharray="2 1"/><circle cx="5" cy="6" r="2" fill="none" stroke="#ddd"/><path d="M12 9v3H9z" fill="#ddd"/></svg></button>
    <button aria-label="平移"><svg viewBox="0 0 12 12"><path d="M3 5V2h1.500v3V1H6v4-3.500h1.500V5 2.500H9V8q-1 3-3 3T2 7l-1-2h1z" fill="#ddd"/><path d="M12 9v3H9z" fill="#ddd"/></svg></button>
    <button aria-label="环绕"><svg viewBox="0 0 12 12"><circle cx="5" cy="6" r="4" fill="#ddd"/><path d="M3 3q5-3 7 1L7 7z" fill="#3fb8b4"/><path d="M12 9v3H9z" fill="#ddd"/></svg></button>
    <button aria-label="最大化视口"><svg viewBox="0 0 12 12"><path d="M1 1h7v5H1zM5 5h6v6H5z" fill="#ddd" stroke="#555"/></svg></button>
  </div>
</footer>
<div class="h-[2px] shrink-0 bg-[#8c9094]"></div>

<p class="pointer-events-none absolute bottom-0 left-[9px] font-['Open_Sans','Noto_Sans_CJK_SC',sans-serif] text-[13px] leading-[18px] whitespace-nowrap text-black/40">www.toymoban.com 网络图片仅供展示，非存储，如有侵权请联系删除。</p>
<p class="pointer-events-none absolute right-[5px] bottom-[2px] font-['Liberation_Sans','Noto_Sans_CJK_SC',sans-serif] whitespace-nowrap text-white/70">CSDN @matlab练习生</p>

<script>
  // Frame ruler: one tick per frame, a label every five frames, and the current frame marker.
  const ruler = document.getElementById('ruler');
  const at = f => `calc(4px + (100% - 8px) * ${f / 100})`;
  for (let f = 0; f <= 100; f++) {
    const t = document.createElement('i');
    t.className = f % 5 ? 'absolute top-0 h-[6px] w-px bg-[#505050]' : 'absolute top-0 h-[13px] w-px bg-[#505050]';
    t.style.left = at(f);
    ruler.append(t);
    if (f % 5 === 0) {
      const n = document.createElement('span');
      n.className = 'absolute bottom-0 -translate-x-1/2 leading-2';
      n.style.left = at(f);
      n.textContent = f;
      ruler.append(n);
    }
  }
  const m = document.createElement('i');
  m.className = 'absolute top-0 h-full w-1 -translate-x-1/2 bg-[#8c8222]';
  m.style.left = at(46);
  ruler.append(m);
</script>
</body>
</html>
